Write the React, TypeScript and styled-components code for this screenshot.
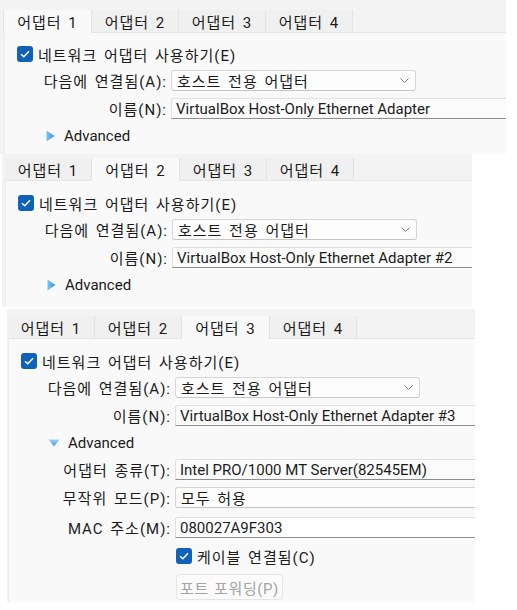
import React from 'react';
import styled, { createGlobalStyle } from 'styled-components';

const GlobalStyle = createGlobalStyle`
  html, body {
    margin: 0;
    padding: 0;
    background: #ffffff;
  }
  body {
    font-family: Roboto, "Noto Sans CJK KR", sans-serif;
    font-size: 15px;
    letter-spacing: 1px;
    word-spacing: 2px;
    color: #1b1b1b;
  }
`;

const Frame = styled.section<{ $left: number; $width: number; $top: number; $padTop: number; $padLeft: number }>`
  margin: ${p => p.$top}px 0 0 ${p => p.$left}px;
  width: ${p => p.$width}px;
  padding: ${p => p.$padTop}px 0 0 ${p => p.$padLeft}px;
  box-sizing: border-box;
  background: #f3f3f3;
`;

const TabBar = styled.div`
  display: flex;
  height: 22px;
  border-bottom: 1px solid #e5e5e5;
  box-sizing: content-box;
`;

const Tab = styled.div<{ $active: boolean }>`
  width: ${p => (p.$active ? 89 : 87)}px;
  height: ${p => (p.$active ? 23 : 22)}px;
  display: flex;
  align-items: center;
  justify-content: center;
  box-sizing: border-box;
  background: ${p => (p.$active ? '#f9f9f9' : '#f0f0f0')};
  border-right: 1px solid #e3e3e3;
  border-left: ${p => (p.$active ? '1px solid #e3e3e3' : 'none')};
  margin-left: ${p => (p.$active ? -1 : 0)}px;
  color: #1b1b1b;
  white-space: nowrap;
  z-index: ${p => (p.$active ? 1 : 0)};
`;

const Pane = styled.div<{ $height: number }>`
  height: ${p => p.$height}px;
  background: #f9f9f9;
  border-left: 1px solid #ebebeb;
  box-sizing: border-box;
  display: flex;
  flex-direction: column;
  overflow: hidden;
`;

const Row = styled.div<{ $mt: number }>`
  display: flex;
  align-items: center;
  margin-top: ${p => p.$mt}px;
`;

const Label = styled.div`
  width: 162px;
  flex: none;
  text-align: right;
  padding-right: 4px;
  white-space: nowrap;
`;

const CheckLine = styled.label<{ $indent: number }>`
  display: flex;
  align-items: center;
  gap: 5px;
  height: 16px;
  margin-left: ${p => p.$indent}px;
  white-space: nowrap;
`;

const Box = styled.span`
  width: 16px;
  height: 16px;
  border-radius: 3px;
  background: #0f62b8;
  display: flex;
  align-items: center;
  justify-content: center;
  flex: none;
`;

const Combo = styled.div<{ $fill: boolean }>`
  height: 21px;
  box-sizing: border-box;
  ${p => (p.$fill ? 'flex: 1;' : 'width: 245px;')}
  background: #fdfdfd;
  border: 1px solid #d6d6d6;
  border-bottom-color: #c6c6c6;
  ${p => (p.$fill ? 'border-right: none; border-radius: 3px 0 0 3px;' : 'border-radius: 3px;')}
  display: flex;
  align-items: center;
  justify-content: space-between;
  padding: 0 6px 0 5px;
  white-space: nowrap;
`;

const Edit = styled.div<{ $white: boolean }>`
  flex: 1;
  height: 21px;
  box-sizing: border-box;
  background: ${p => (p.$white ? '#ffffff' : '#fbfbfb')};
  border: 1px solid #e0e0e0;
  border-right: none;
  border-bottom: 1px solid #8e8e8e;
  border-radius: 3px 0 0 0;
  display: flex;
  align-items: center;
  padding-left: 4px;
  white-space: nowrap;
  overflow: hidden;
  letter-spacing: 0;
  word-spacing: 0;
`;

const Disclosure = styled.div`
  display: flex;
  align-items: center;
  gap: 8px;
  height: 18px;
  padding-left: 39px;
  color: #1b1b1b;
  letter-spacing: 0;
`;

const Arrow = styled.span`
  width: 12px;
  height: 12px;
  display: flex;
  align-items: center;
  justify-content: center;
`;

const Button = styled.button`
  height: 26px;
  padding: 0 3px;
  font: inherit;
  letter-spacing: 0.6px;
  word-spacing: 1px;
  color: #a3a3a3;
  background: #fbfbfb;
  border: 1px solid #e5e5e5;
  border-radius: 4px;
  margin-left: 1px;
`;

const Check = () => (
  <Box>
    <svg width="10" height="8" viewBox="0 0 10 8">
      <path d="M1 4.2 L3.8 6.8 L9 1.2" fill="none" stroke="#ffffff" strokeWidth="1.4" />
    </svg>
  </Box>
);

const Chevron = () => (
  <svg width="9" height="5" viewBox="0 0 9 5">
    <path d="M0.5 0.5 L4.5 4.5 L8.5 0.5" fill="none" stroke="#7a7a7a" strokeWidth="1" />
  </svg>
);

const Triangle = ({ open }: { open: boolean }) => (
  <Arrow>
    {open ? (
      <svg width="12" height="8" viewBox="0 0 12 8">
        <defs>
          <linearGradient id="tgd" x1="0" y1="0" x2="0" y2="1">
            <stop offset="0" stopColor="#9ad4f6" />
            <stop offset="1" stopColor="#3a9de0" />
          </linearGradient>
        </defs>
        <polygon points="0.5,0.5 11.5,0.5 6,7.5" fill="url(#tgd)" />
      </svg>
    ) : (
      <svg width="9" height="12" viewBox="0 0 9 12">
        <defs>
          <linearGradient id="tgr" x1="0" y1="0" x2="1" y2="0">
            <stop offset="0" stopColor="#7cc6f4" />
            <stop offset="1" stopColor="#2f95dc" />
          </linearGradient>
        </defs>
        <polygon points="0.5,0.5 8.5,6 0.5,11.5" fill="url(#tgr)" />
      </svg>
    )}
  </Arrow>
);

type PanelProps = {
  active: number;
  name: string;
  open: boolean;
  left: number;
  width: number;
  top: number;
  padTop: number;
  padLeft: number;
  height: number;
  firstGap: number;
};

const AdapterPanel = ({ active, name, open, left, width, top, padTop, padLeft, height, firstGap }: PanelProps) => (
  <Frame $left={left} $width={width} $top={top} $padTop={padTop} $padLeft={padLeft}>
    <TabBar>
      {[1, 2, 3, 4].map(n => (
        <Tab key={n} $active={n === active}>어댑터 {n}</Tab>
      ))}
    </TabBar>
    <Pane $height={height}>
      <Row $mt={firstGap}>
        <CheckLine $indent={12}>
          <Check />
          네트워크 어댑터 사용하기(E)
        </CheckLine>
      </Row>
      <Row $mt={8}>
        <Label>다음에 연결됨(A):</Label>
        <Combo $fill={false}>
          호스트 전용 어댑터
          <Chevron />
        </Combo>
      </Row>
      <Row $mt={7}>
        <Label>이름(N):</Label>
        <Edit $white={false}>{name}</Edit>
      </Row>
      <Row $mt={8}>
        <Disclosure>
          <Triangle open={open} />
          Advanced
        </Disclosure>
      </Row>
      {open && (
        <>
          <Row $mt={7}>
            <Label>어댑터 종류(T):</Label>
            <Edit $white={false}>Intel PRO/1000 MT Server(82545EM)</Edit>
          </Row>
          <Row $mt={7}>
            <Label>무작위 모드(P):</Label>
            <Combo $fill={true}>모두 허용</Combo>
          </Row>
          <Row $mt={9}>
            <Label>MAC 주소(M):</Label>
            <Edit $white={true}>080027A9F303</Edit>
          </Row>
          <Row $mt={10}>
            <CheckLine $indent={167}>
              <Check />
              케이블 연결됨(C)
            </CheckLine>
          </Row>
          <Row $mt={10}>
            <Label />
            <Button disabled>포트 포워딩(P)</Button>
          </Row>
        </>
      )}
    </Pane>
  </Frame>
);

export default function App() {
  return (
    <>
      <GlobalStyle />
      <AdapterPanel active={1} name="VirtualBox Host-Only Ethernet Adapter" open={false}
        left={0} width={506} top={0} padTop={10} padLeft={4} height={121} firstGap={13} />
      <AdapterPanel active={2} name="VirtualBox Host-Only Ethernet Adapter #2" open={false}
        left={2} width={470} top={0} padTop={4} padLeft={3} height={126} firstGap={14} />
      <AdapterPanel active={3} name="VirtualBox Host-Only Ethernet Adapter #3" open={true}
        left={7} width={468} top={2} padTop={7} padLeft={1} height={263} firstGap={14} />
    </>
  );
}
